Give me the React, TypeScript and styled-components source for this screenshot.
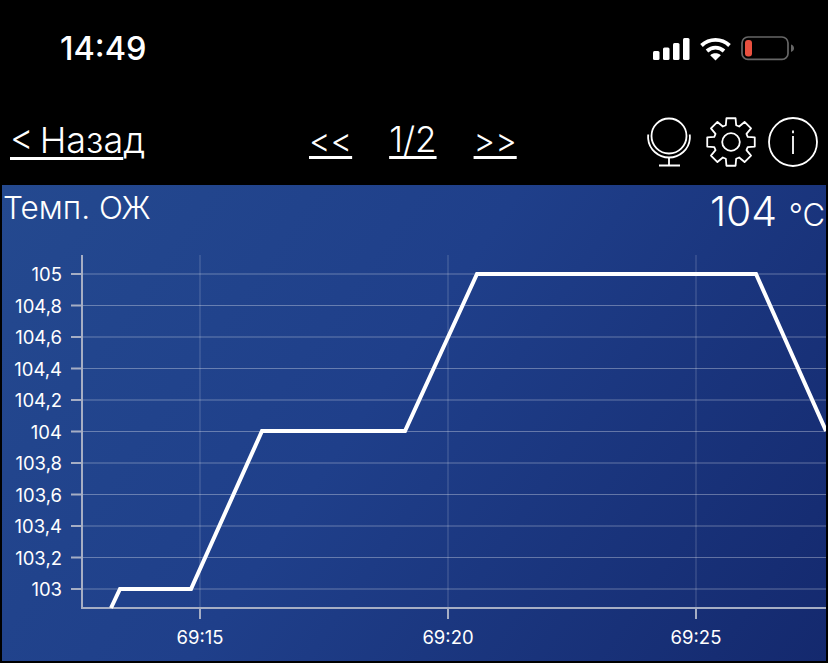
import styled, { createGlobalStyle } from "styled-components";

const GlobalStyle = createGlobalStyle`
  html, body {
    margin: 0;
    padding: 0;
    background: #000;
    font-family: Inter, "Liberation Sans", sans-serif;
  }
`;

const yTicks = ["105", "104,8", "104,6", "104,4", "104,2", "104", "103,8", "103,6", "103,4", "103,2", "103"];
const xTicks = [
  { x: 200, label: "69:15" },
  { x: 448, label: "69:20" },
  { x: 696, label: "69:25" },
];
const CHART_TOP = 185;
const line = "111,608 120,589 191,589 262,431 405,431 477,274 756,274 826,431";

// gear outline, 8 teeth around the centre of a 50x50 box
const gearPath = () => {
  const pts: string[] = [];
  for (let k = 0; k < 8; k++) {
    const a = (k * Math.PI) / 4 - Math.PI / 2;
    const outer = 24.2;
    const root = 17.5;
    const wide = 0.3;
    const narrow = 0.19;
    [
      [root, -wide],
      [outer, -narrow],
      [outer, narrow],
      [root, wide],
    ].forEach(([r, d]) => {
      pts.push(`${(25 + r * Math.cos(a + d)).toFixed(2)},${(25 + r * Math.sin(a + d)).toFixed(2)}`);
    });
  }
  return `M${pts.join("L")}Z`;
};

const App = () => {
  return (
    <Screen>
      <GlobalStyle />
      <StatusBar>
        <Clock>14:49</Clock>
        <StatusIcons>
          <svg width="37" height="24" viewBox="0 0 37 24" fill="#fff">
            <rect x="0" y="14" width="6.5" height="9" rx="1.5" />
            <rect x="10" y="10.5" width="6.5" height="12.5" rx="1.5" />
            <rect x="20" y="6" width="6.5" height="17" rx="1.5" />
            <rect x="30" y="1" width="6.5" height="22" rx="1.5" />
          </svg>
          <svg width="31" height="24" viewBox="0 0 31 24" fill="none" stroke="#fff" strokeWidth="3.8">
            <path d="M1.5 8.5C9.5 1 21.5 1 29.5 8.5" />
            <path d="M7 14C12 9.5 19 9.5 24 14" />
            <path d="M15.5 23.5 10.2 18.2C13 15.7 18 15.7 20.8 18.2Z" fill="#fff" stroke="none" />
          </svg>
          <svg width="53" height="25" viewBox="0 0 53 25" fill="none">
            <rect x="1" y="1" width="46" height="22.4" rx="6" stroke="#666" strokeWidth="1.7" />
            <rect x="4" y="4" width="7" height="16.6" rx="3" fill="#e9503f" />
            <path d="M50 8.5c2 .6 3 2 3 3.7s-1 3.1-3 3.7z" fill="#666" />
          </svg>
        </StatusIcons>
      </StatusBar>
      <NavBar>
        <BackLink>
          <u>&lt; Наза</u>д
        </BackLink>
        <Pager>
          <PagerLink $size={33}>&lt;&lt;</PagerLink>
          <PagerLink $size={35}>1/2</PagerLink>
          <PagerLink $size={33}>&gt;&gt;</PagerLink>
        </Pager>
        <Tools>
          <svg width="46" height="50" viewBox="0 0 46 50" fill="none" stroke="#fff" strokeWidth="1.8">
            <circle cx="22" cy="19" r="17.5" />
            <path d="M1.2 17.5c0 1.5-.2 3 0 4.5C2 32 11 40.5 22 40.5S42 32 42.8 22c.2-1.5 0-3 0-4.5" />
            <path d="M22 40.5v8M12 48.5h21" />
          </svg>
          <svg width="50" height="50" viewBox="0 0 50 50" fill="none" stroke="#fff" strokeWidth="1.8" strokeLinejoin="round">
            <circle cx="25" cy="25" r="8.8" />
            <path d={gearPath()} />
          </svg>
          <svg width="50" height="50" viewBox="0 0 50 50" fill="none" stroke="#fff" strokeWidth="1.8">
            <circle cx="25" cy="25" r="24" />
            <path d="M25 19v18M25 13.5v2.8" />
          </svg>
        </Tools>
      </NavBar>
      <Panel>
        <PanelHeader>
          <PanelTitle>Темп. ОЖ</PanelTitle>
          <Reading>
            104 <Unit>°C</Unit>
          </Reading>
        </PanelHeader>
        <ChartSvg viewBox="2 0 824 476" width="824" height="476">
          {yTicks.map((label, i) => {
            const y = 274 + i * 31.5 - CHART_TOP;
            return (
              <g key={label}>
                <line x1="82" x2="826" y1={y} y2={y} stroke="#fff" strokeOpacity="0.32" />
                <line x1="71" x2="82" y1={y} y2={y} stroke="#a6aec4" strokeWidth="2" />
                <AxisLabel x="62" y={y + 7} textAnchor="end">
                  {label}
                </AxisLabel>
              </g>
            );
          })}
          {xTicks.map((t) => (
            <g key={t.label}>
              <line x1={t.x} x2={t.x} y1="70" y2="423" stroke="#fff" strokeOpacity="0.22" />
              <line x1={t.x} x2={t.x} y1="423" y2="434" stroke="#a6aec4" strokeWidth="2" />
              <AxisLabel x={t.x} y="459" textAnchor="middle">
                {t.label}
              </AxisLabel>
            </g>
          ))}
          <line x1="82" x2="82" y1="70" y2="424" stroke="#a6aec4" strokeWidth="2" />
          <line x1="81" x2="826" y1="423" y2="423" stroke="#a6aec4" strokeWidth="2" />
          <polyline
            points={line
              .split(" ")
              .map((p) => {
                const [x, y] = p.split(",").map(Number);
                return `${x},${y - CHART_TOP}`;
              })
              .join(" ")}
            fill="none"
            stroke="#fff"
            strokeWidth="4"
          />
        </ChartSvg>
      </Panel>
    </Screen>
  );
};

export default App;

const Screen = styled.div`
  width: 828px;
  height: 663px;
  background: #000;
  color: #fff;
  overflow: hidden;
`;

const StatusBar = styled.div`
  height: 98px;
  display: flex;
  justify-content: space-between;
  align-items: flex-start;
  padding: 0 34px 0 60px;
  box-sizing: border-box;
`;

const Clock = styled.div`
  margin-top: 29px;
  font-size: 32.5px;
  line-height: 39px;
  font-weight: 500;
`;

const StatusIcons = styled.div`
  display: flex;
  gap: 10px;
  align-items: center;
  margin-top: 36px;
`;

const NavBar = styled.div`
  height: 87px;
  display: flex;
  align-items: center;
  padding: 0 10px;
  box-sizing: border-box;
`;

const BackLink = styled.div`
  width: 299px;
  font-size: 36px;
  font-weight: 300;
  line-height: 40px;
  word-spacing: -4px;
  margin-top: -4px;
  u {
    text-decoration-thickness: 2.5px;
    text-underline-offset: 4px;
  }
`;

const Pager = styled.div`
  display: flex;
  align-items: baseline;
  gap: 37px;
  line-height: 40px;
  font-weight: 300;
  margin-top: -4px;
`;

const PagerLink = styled.span<{ $size: number }>`
  font-size: ${(p) => p.$size}px;
  text-decoration: underline;
  text-decoration-thickness: 2.5px;
  text-underline-offset: 4px;
`;

const Tools = styled.div`
  display: flex;
  gap: 12.5px;
  align-items: center;
  margin-left: auto;
`;

const Panel = styled.div`
  margin: 0 2px;
  height: 476px;
  background: linear-gradient(125deg, #24498f 0%, #1f3f8a 45%, #14296e 100%);
  position: relative;
`;

const PanelHeader = styled.div`
  display: flex;
  justify-content: space-between;
  padding: 3px 1px 0 1px;
`;

const PanelTitle = styled.div`
  font-size: 31.5px;
  font-weight: 300;
  line-height: 40px;
`;

const Reading = styled.div`
  font-size: 41px;
  font-weight: 300;
  line-height: 46px;
`;

const Unit = styled.span`
  font-size: 31px;
`;

const ChartSvg = styled.svg`
  position: absolute;
  left: 0;
  top: 0;
`;

const AxisLabel = styled.text`
  fill: #fff;
  font-size: 18.5px;
  font-family: Inter, "Liberation Sans", sans-serif;
  font-weight: 400;
`;
